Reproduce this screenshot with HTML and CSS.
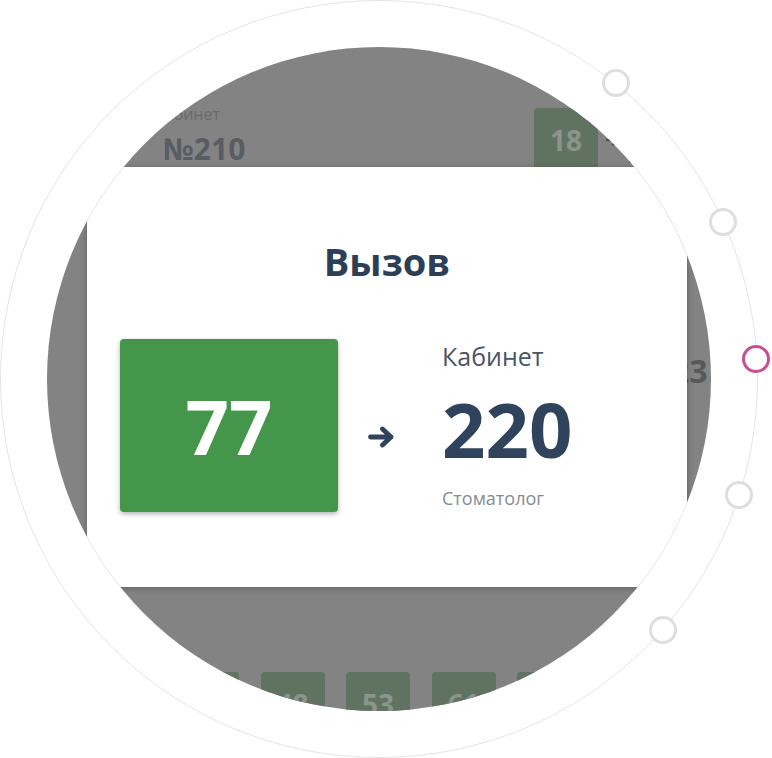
FILE: index.html
```html
<!DOCTYPE html>
<html lang="ru">
<head>
<meta charset="utf-8">
<title>Вызов</title>
<link rel="stylesheet" href="styles.css">
</head>
<body>
<div class="stage">
  <div class="disk">
    <div class="screen">
      <div class="head">
        <div class="room">
          <div class="room-label">Кабинет</div>
          <div class="room-num">№210</div>
        </div>
        <div class="head-right">
          <div class="tile tile-top">18</div>
          <svg class="mini-arrow" width="14" height="12" viewBox="0 0 14 12"><path d="M1 6H12M7 1.5L12 6L7 10.5" fill="none" stroke="#4a4f55" stroke-width="2.4" stroke-linecap="round" stroke-linejoin="round"/></svg>
          <span class="head-room">2</span>
        </div>
      </div>
      <div class="mid">23</div>
      <div class="tiles">
        <div class="tile">35</div>
        <div class="tile">48</div>
        <div class="tile">53</div>
        <div class="tile">61</div>
        <div class="tile">72</div>
        <div class="tile">80</div>
      </div>
    </div>
    <div class="modal">
      <h1 class="modal-title">Вызов</h1>
      <div class="call">
        <div class="ticket">77</div>
        <svg class="arrow" width="26" height="22" viewBox="0 0 26 22"><path d="M2.5 11H23M14.5 3L23 11L14.5 19" fill="none" stroke="#2f435c" stroke-width="4.8" stroke-linecap="round" stroke-linejoin="round"/></svg>
        <div class="dest">
          <div class="dest-label">Кабинет</div>
          <div class="dest-num">220</div>
          <div class="dest-spec">Стоматолог</div>
        </div>
      </div>
    </div>
  </div>
  <span class="pin pin-1"></span>
  <span class="pin pin-2"></span>
  <span class="pin pin-3 pin-active"></span>
  <span class="pin pin-4"></span>
  <span class="pin pin-5"></span>
</div>
</body>
</html>
```

FILE: styles.css
```css
html, body {
  margin: 0;
  padding: 0;
  background: #ffffff;
}
body {
  font-family: "Open Sans", "Noto Sans", "DejaVu Sans", sans-serif;
  width: 772px;
  height: 758px;
  overflow: hidden;
}
.stage {
  position: relative;
  width: 758px;
  height: 758px;
  box-sizing: border-box;
  border: 1px solid #e4e4e4;
  border-radius: 50%;
}
.disk {
  position: relative;
  margin: 46px;
  width: 664px;
  height: 664px;
  border-radius: 50%;
  overflow: hidden;
  background: #838383;
}
.screen {
  padding-top: 59px;
}
.head {
  display: grid;
  grid-template-columns: 371px auto;
  padding-left: 116px;
  height: 66px;
}
.room-label {
  margin-left: -8px;
  font-size: 16px;
  line-height: 17px;
  color: #6a6a6a;
}
.room-num {
  margin-top: 11px;
  font-size: 30px;
  line-height: 30px;
  font-weight: 700;
  color: #585d63;
}
.head-right {
  display: flex;
  align-items: center;
  gap: 8px;
  margin-top: 2px;
  height: 64px;
}
.head-room {
  font-size: 30px;
  font-weight: 700;
  color: #4a4f55;
  margin-top: 22px;
}
.tile {
  flex: none;
  width: 64px;
  height: 64px;
  border-radius: 4px;
  background: #607361;
  color: #8b958c;
  font-size: 28px;
  font-weight: 700;
  display: flex;
  align-items: center;
  justify-content: center;
}
.mid {
  margin-top: 183px;
  padding-left: 624px;
  font-size: 32px;
  line-height: 32px;
  font-weight: 700;
  color: #585858;
}
.tiles {
  display: flex;
  gap: 21.5px;
  margin-top: 285px;
  padding-left: 128px;
}
.modal {
  position: absolute;
  left: 40px;
  top: 120px;
  width: 600px;
  height: 420px;
  box-sizing: border-box;
  background: #ffffff;
  box-shadow: 0 1px 6px rgba(0, 0, 0, 0.28);
  padding-top: 75px;
}
.modal-title {
  margin: 0;
  text-align: center;
  font-size: 38px;
  line-height: 38px;
  font-weight: 700;
  color: #2d3f56;
}
.call {
  display: flex;
  align-items: flex-start;
  margin-top: 59px;
  padding-left: 33px;
}
.ticket {
  flex: none;
  width: 218px;
  height: 173px;
  border-radius: 4px;
  background: #43964a;
  box-shadow: 0 2px 5px rgba(0, 0, 0, 0.3);
  color: #ffffff;
  font-size: 76px;
  font-weight: 700;
  display: flex;
  align-items: center;
  justify-content: center;
}
.arrow {
  flex: none;
  margin-left: 30px;
  margin-top: 87px;
}
.dest {
  margin-left: 48px;
  margin-top: 5px;
}
.dest-label {
  font-size: 25px;
  line-height: 25px;
  color: #4b5564;
}
.dest-num {
  margin-top: 22px;
  font-size: 76px;
  line-height: 76px;
  font-weight: 700;
  color: #2f435c;
}
.dest-spec {
  margin-top: 22px;
  font-size: 18px;
  line-height: 18px;
  color: #868b92;
}
.pin {
  position: absolute;
  width: 28px;
  height: 28px;
  box-sizing: border-box;
  border: 3px solid #dedede;
  border-radius: 50%;
  background: #ffffff;
}
.pin-active {
  border-color: #c64f96;
}
.pin-1 { left: 601px; top: 68px; }
.pin-2 { left: 708px; top: 207px; }
.pin-3 { left: 741px; top: 344px; }
.pin-4 { left: 724px; top: 480px; }
.pin-5 { left: 648px; top: 615px; }
```
